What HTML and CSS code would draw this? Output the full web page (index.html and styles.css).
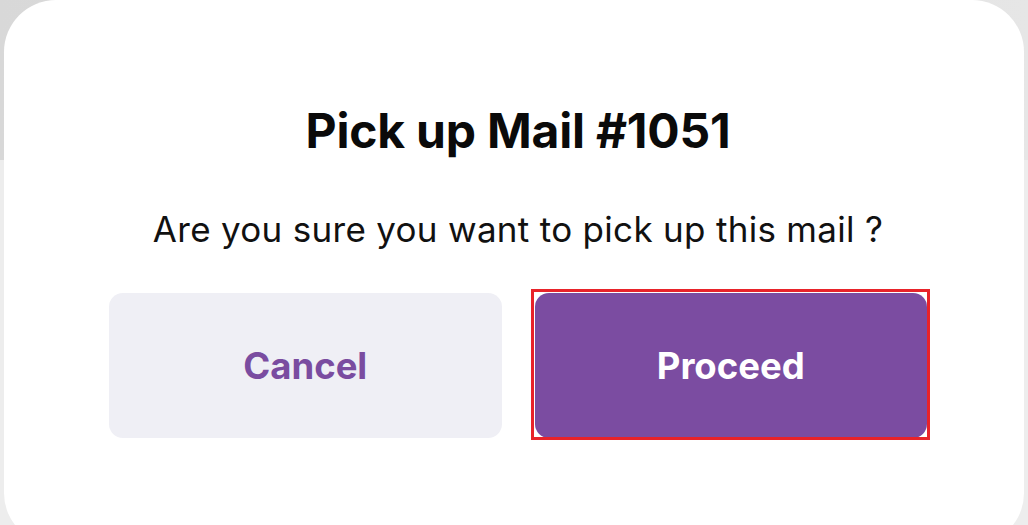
FILE: index.html
```html
<!DOCTYPE html>
<html>
<head>
<meta charset="utf-8">
<link rel="stylesheet" href="styles.css">
</head>
<body>
<div class="backdrop">
  <div class="backdrop-top"></div>
  <div class="dialog">
    <h1 class="title">Pick up Mail #1051</h1>
    <p class="message">Are you sure you want to pick up this mail ?</p>
    <div class="actions">
      <button class="btn btn-cancel">Cancel</button>
      <button class="btn btn-proceed">Proceed</button>
    </div>
  </div>
</div>
</body>
</html>
```
FILE: styles.css
```css
html, body {
  margin: 0;
  padding: 0;
  width: 1028px;
  height: 525px;
  overflow: hidden;
  font-family: Inter, "Noto Sans", sans-serif;
}
.backdrop {
  position: relative;
  width: 1028px;
  height: 525px;
  background: #ededed;
  overflow: hidden;
}
.backdrop-top {
  position: absolute;
  left: 0;
  top: 0;
  width: 1028px;
  height: 160px;
  background: linear-gradient(90deg, #d8d8d8 0%, #e6e6e6 100%);
}
.dialog {
  position: absolute;
  left: 4px;
  top: 0;
  width: 1020px;
  height: 545px;
  background: #ffffff;
  border-radius: 52px;
  box-sizing: border-box;
  padding: 102px 97px 0 105px;
  display: flex;
  flex-direction: column;
  align-items: center;
}
.title {
  margin: 0;
  font-size: 48px;
  font-weight: 700;
  line-height: 58px;
  color: #0a0a0a;
  letter-spacing: -0.2px;
}
.message {
  margin: 48px 0 0;
  font-size: 35px;
  font-weight: 400;
  line-height: 42px;
  color: #111;
  letter-spacing: 0.3px;
}
.actions {
  margin-top: 43px;
  align-self: stretch;
  display: flex;
  gap: 33px;
}
.btn {
  flex: 1;
  height: 145px;
  border: none;
  border-radius: 14px;
  font-family: Inter, "Noto Sans", sans-serif;
  font-size: 36.5px;
  font-weight: 700;
  padding: 0;
}
.btn-cancel {
  background: #efeff5;
  color: #7a4ca0;
}
.btn-proceed {
  position: relative;
  background: #7b4ca1;
  color: #ffffff;
}
.btn-proceed::after {
  content: "";
  position: absolute;
  left: -4px;
  top: -4px;
  right: -3px;
  bottom: -2px;
  border: 3px solid #e8232a;
  pointer-events: none;
}
```
